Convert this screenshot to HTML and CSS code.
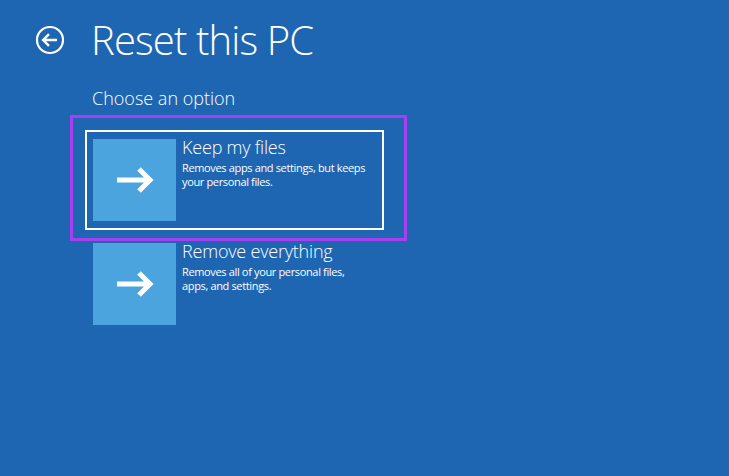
FILE: index.html
```html
<!DOCTYPE html>
<html lang="en">
<head>
  <meta charset="UTF-8" />
  <meta name="viewport" content="width=device-width, initial-scale=1.0"/>
  <title>Reset this PC</title>
  <link rel="stylesheet" href="styles.css">
</head>
<body>
  <header class="header">
    <button class="back" aria-label="Back">
      <svg width="30" height="30" viewBox="0 0 30 30">
        <circle cx="15" cy="15" r="13" fill="none" stroke="#fff" stroke-width="2.2"/>
        <path d="M22 15H8.5M14 9.2L8.2 15L14 20.8" fill="none" stroke="#fff" stroke-width="2.4"/>
      </svg>
    </button>
    <h1>Reset this PC</h1>
  </header>

  <main class="content">
    <h2>Choose an option</h2>

    <div class="options">
      <div class="option selected">
        <div class="tile">
          <svg width="40" height="28" viewBox="0 0 40 28">
            <path d="M2 14H35M24 3L35 14L24 25" fill="none" stroke="#fff" stroke-width="5"/>
          </svg>
        </div>
        <div class="option-text">
          <div class="option-title">Keep my files</div>
          <p>Removes apps and settings, but keeps your personal files.</p>
        </div>
      </div>

      <div class="option">
        <div class="tile">
          <svg width="40" height="28" viewBox="0 0 40 28">
            <path d="M2 14H35M24 3L35 14L24 25" fill="none" stroke="#fff" stroke-width="5"/>
          </svg>
        </div>
        <div class="option-text">
          <div class="option-title">Remove everything</div>
          <p>Removes all of your personal files, apps, and settings.</p>
        </div>
      </div>
    </div>
  </main>
</body>
</html>
```

FILE: styles.css
```css
:root {
  --bg: #1e66b2;
  --tile: #4ba4de;
  --text: #ffffff;
  --mark: #a640ee;
}

body {
  margin: 0;
  min-height: 100vh;
  background: var(--bg);
  color: var(--text);
  font-family: 'Open Sans', 'Noto Sans', sans-serif;
}

.header {
  display: flex;
  align-items: center;
  gap: 26px;
  padding: 18px 0 0 35px;
}

.back {
  background: none;
  border: none;
  padding: 0;
  width: 30px;
  height: 30px;
  display: flex;
}

h1 {
  margin: 0;
  font-size: 40px;
  font-weight: 300;
  line-height: 44px;
  letter-spacing: -0.85px;
}

.content {
  padding-left: 92px;
}

h2 {
  margin: 24px 0 0;
  font-size: 18px;
  font-weight: 300;
  line-height: 24px;
}

.options {
  display: flex;
  flex-direction: column;
  gap: 4px;
  margin: 20px 0 0 -7px;
  width: 299px;
}

.option {
  position: relative;
  display: flex;
  gap: 6px;
  height: 100px;
  padding: 7px 6px;
  box-sizing: border-box;
  border: 2px solid transparent;
}

.option.selected {
  border-color: #fff;
}

/* annotation frame drawn over the selected option */
.option.selected::after {
  content: "";
  position: absolute;
  top: -17px;
  left: -17px;
  right: -25px;
  bottom: -13px;
  border: 3px solid var(--mark);
  pointer-events: none;
}

.tile {
  flex: none;
  width: 83px;
  height: 82px;
  background: var(--tile);
  display: flex;
  align-items: center;
  justify-content: center;
}

.option-title {
  font-size: 18px;
  font-weight: 300;
  line-height: 18px;
  margin-top: -1px;
  letter-spacing: -0.2px;
}

.option-text p {
  margin: 5px 0 0;
  font-size: 11px;
  line-height: 14px;
  letter-spacing: -0.35px;
  width: 190px;
}
```
